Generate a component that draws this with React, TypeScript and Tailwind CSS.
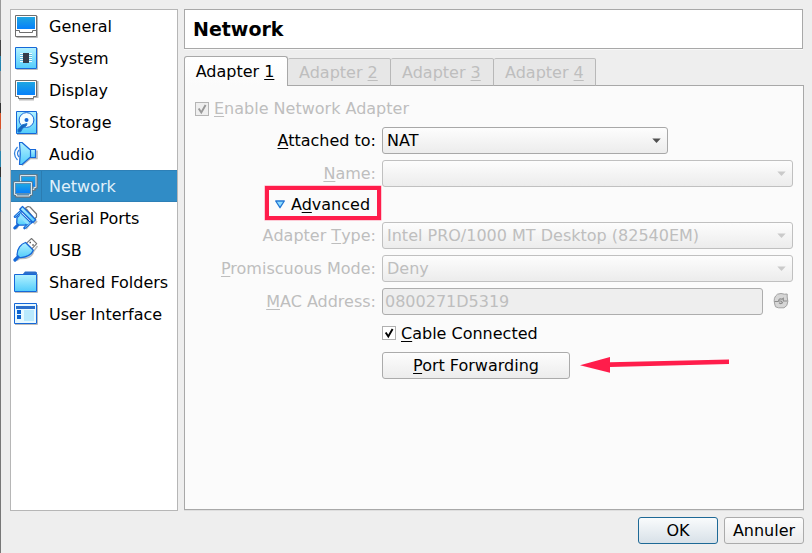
import React from 'react';

const BLUE = '#1668d8';

function Gradients() {
  return (
    <svg width="0" height="0" className="absolute">
      <defs>
        <linearGradient id="screen" x1="0" y1="0" x2="0" y2="1">
          <stop offset="0" stopColor="#1fa6e2" />
          <stop offset="1" stopColor="#0680fa" />
        </linearGradient>
        <linearGradient id="cyan" x1="0" y1="0" x2="0" y2="1">
          <stop offset="0" stopColor="#b4f2ff" />
          <stop offset="1" stopColor="#52ccfb" />
        </linearGradient>
      </defs>
    </svg>
  );
}

function Icon({ children }: { children: React.ReactNode }) {
  return (
    <svg width="26" height="26" viewBox="0 0 26 26" className="shrink-0" fill="none">
      {children}
    </svg>
  );
}

const icons: Record<string, React.ReactNode> = {
  General: (
    <Icon>
      <path d="M3.5 24.5H24.5V3" stroke="#bbb" />
      <path d="M2.5 2.5h21v21h-21z" fill="#fff" stroke="#6e6e6e" />
      <path d="M4 4h18v12H4z" fill="url(#screen)" />
      <path d="M2.5 17.5h4v2h13v-2h4" stroke="#6e6e6e" />
    </Icon>
  ),
  System: (
    <Icon>
      <path d="M3.5 24.5H24.5V3" stroke="#bbb" />
      <path d="M2.5 2.5h21v21h-21z" fill="url(#cyan)" stroke={BLUE} />
      <path d="M7 8.5h12M7 10.5h12M7 12.5h12M7 14.5h12M7 16.5h12" stroke="#f4fdff" />
      <path d="M7 9.5h12M7 11.5h12M7 13.5h12M7 15.5h12" stroke="#62bde0" />
      <path d="M10 8h6v10h-6z" fill="#353b48" />
    </Icon>
  ),
  Display: (
    <Icon>
      <path d="M6 22.5h15M24.5 4v16h-4" stroke="#bbb" strokeWidth="2" />
      <path d="M2.5 3.5h21v16h-3v2h-15v-2h-3z" fill="#fff" stroke="#6e6e6e" />
      <path d="M4 5h18v13H4z" fill="url(#screen)" />
    </Icon>
  ),
  Storage: (
    <Icon>
      <path d="M4 25.5h20.5V4" stroke="#bbb" />
      <path d="M3.5 2.5h20v22h-20z" fill="url(#cyan)" stroke={BLUE} />
      <circle cx="13.5" cy="11" r="7.4" fill="#f4fdff" stroke={BLUE} />
      <circle cx="13.5" cy="11" r="2" fill={BLUE} />
      <path d="M5 20.5l4-4.5 5-1.5-.5 2-4 3-2 3.5H5z" fill="#1565bc" stroke="#1a75cf" />
    </Icon>
  ),
  Audio: (
    <Icon>
      <path d="M4.500 6Q-1.500 12.500 4.500 19M6 9Q3 12.500 6 16" stroke="#3181dd" strokeWidth="1.200" />
      <path d="M9 24.500l8.500-7h6.500V9.500" stroke="#b5b5b5" strokeWidth="1.500" />
      <path d="M17 8.500h5.500v8H17z" fill="url(#cyan)" stroke={BLUE} strokeWidth="1.200" />
      <path d="M6.500 1.500H9L17.500 9v7L9 23.500H6.500Q8 12.500 6.500 1.500z" fill="url(#cyan)" stroke={BLUE} strokeWidth="1.200" strokeLinejoin="round" />
    </Icon>
  ),
  Network: (
    <Icon>
      <path d="M7.500 2.500h16v12h-2v2h-12v-2h-2z" fill="#5d8fb4" stroke="#66757f" strokeWidth="2.400" />
      <path d="M7.500 2.500h15.500v12h-2v2h-11v-2h-2.500z" fill="#5d8fb4" stroke="#d8e4eb" />
      <path d="M9 4h13v9.500H9z" fill="url(#screen)" />
      <path d="M1.500 9.500h17v12h-2v2h-13v-2h-2z" fill="#5d8fb4" stroke="#66757f" strokeWidth="2.400" />
      <path d="M1.500 9.500h17v12h-2v1.500h-13v-1.500h-2z" fill="#5d8fb4" stroke="#dce7ed" />
      <path d="M3 11h14v9H3z" fill="url(#screen)" />
    </Icon>
  ),
  'Serial Ports': (
    <Icon>
      <path d="M3 24l2-3M13 24l3-4M21 19l3-3" stroke="#bbb" strokeWidth="2" />
      <path d="M12.500 3l2.500-1.500 2 .5 6.500 7v3l-2 2z" fill="#fff" stroke="#777" strokeWidth="1.200" strokeLinejoin="round" />
      <path d="M1.800 23l3-3" stroke={BLUE} strokeWidth="3" strokeLinecap="round" />
      <path d="M7 7.500l-.5 3L4 12.500l-.3 5.700 2.300 2 6.500-.2 2.500-2.500 3 .5z" fill="url(#cyan)" stroke={BLUE} strokeWidth="1.300" strokeLinejoin="round" />
      <path d="M2 11.700l6.500-6M11.500 23l7.500-6.500" stroke={BLUE} strokeWidth="2.600" strokeLinecap="round" />
      <path d="M2.300 11.400l5.500-5M12 22.500l6-5" stroke="#8ce0ff" strokeWidth=".8" />
      <path d="M9.500 1.500l13.200 13.200-2.700 2.800L6.800 4.300z" fill="url(#cyan)" stroke={BLUE} strokeWidth="1.300" strokeLinejoin="round" />
      <path d="M7 8l10 10-3 1.500-7.500-7.500z" fill="#8fe2fe" />
    </Icon>
  ),
  USB: (
    <Icon>
      <path d="M4 23.500l3-2Q19 22 20.500 14.500L24.500 9" stroke="#bbb" strokeWidth="1.500" />
      <path d="M13.300 6.300L18.500 1.500l5.200 5.200-4.900 5.100z" fill="#fff" stroke="#777" strokeWidth="1.100" strokeLinejoin="round" />
      <path d="M16.500 5.500h1.500M19.300 8h1.500" stroke="#555" strokeWidth="1.500" />
      <path d="M2 23l3-3" stroke={BLUE} strokeWidth="3.200" strokeLinecap="round" />
      <path d="M12.500 5.500l7.800 7.800C19 17.500 13 21 6.500 20.500L4 18C4 11.500 8 7 12.500 5.500z" fill="url(#cyan)" stroke={BLUE} strokeWidth="1.300" strokeLinejoin="round" />
    </Icon>
  ),
  'Shared Folders': (
    <Icon>
      <path d="M2 23.500h22.500V5" stroke="#bbb" />
      <path d="M9.500 5.500l2.500-3h10.500l1.500 1v2z" fill="#2b6fcb" />
      <path d="M1.500 5.500h22v17h-22z" fill="url(#cyan)" stroke={BLUE} />
    </Icon>
  ),
  'User Interface': (
    <Icon>
      <path d="M2 23.500h22.500V4" stroke="#bbb" />
      <path d="M1.500 2.500h22v20h-22z" fill="#e8f9ff" stroke={BLUE} />
      <path d="M3 5h19v3H3z" fill="#2b6fcb" />
      <path d="M4 9h4v4H4zM4 14h4v4H4z" fill="#0c63d0" />
      <path d="M11 9h10v11H11z" fill="#b9e9fd" />
    </Icon>
  ),
};

const sections = Object.keys(icons);

function Key({ children }: { children: React.ReactNode }) {
  return (
    <span className="underline decoration-1 underline-offset-2 [text-decoration-skip-ink:none]">{children}</span>
  );
}

function Sidebar() {
  return (
    <nav className="h-[502px] w-[168px] shrink-0 border border-[#b6b6b6] bg-white">
      {sections.map((name) => {
        const active = name === 'Network';
        return (
          <div
            key={name}
            className={`flex h-8 items-center pl-[2px] ${
              active
                ? 'border-y border-[#2d80b7] bg-[#308cc6] text-[#e0f0fa]'
                : ''
            }`}
          >
            {icons[name]}
            <div
              className={`ml-[2px] flex flex-1 items-center self-stretch ${
                active ? 'border-l border-[#2b7cb1] pl-[7px]' : 'pl-2'
              }`}
            >
              {name}
            </div>
          </div>
        );
      })}
    </nav>
  );
}

function Tabs() {
  return (
    <div className="-mb-px flex h-[30px] items-end">
      <div className="z-10 flex h-[30px] w-[104px] items-center justify-center rounded-t-[3px] border border-b-0 border-[#a8a8a8] bg-gradient-to-b from-white to-[#fbfbfb] pr-[2px]">
        <span>Adapter <Key>1</Key></span>
      </div>
      {[2, 3, 4].map((n) => (
        <div
          key={n}
          className={`flex h-7 items-center rounded-t-[2px] border border-l-0 border-t-[#bfbfbf] border-r-[#b8b8b8] border-b-[#a8a8a8] bg-[#e7e7e7] pl-[11px] text-[#bebebe] ${
            n === 4 ? 'w-[102px]' : 'w-[103px]'
          }`}
        >
          <span>Adapter <Key>{n}</Key></span>
        </div>
      ))}
    </div>
  );
}

function Check({ disabled = false }: { disabled?: boolean }) {
  return (
    <span
      className={`flex h-[14px] w-[14px] shrink-0 items-center justify-center border ${
        disabled ? 'border-[#b5b5b5] bg-[#efefef]' : 'border-[#b0b0b0] bg-white'
      }`}
    >
      <svg width="12" height="12" viewBox="0 0 12 12" fill="none">
        <path d="M2.700 5.500l2.600 4L9.600 2" stroke={disabled ? '#999' : '#000'} strokeWidth="1.900" />
      </svg>
    </span>
  );
}

function Row({ label, className, children }: { label: React.ReactNode; className?: string; children: React.ReactNode }) {
  return (
    <div className={`flex h-[27px] items-center ${className ?? ''}`}>
      <div className="mr-[6px] w-[191px] shrink-0 text-right">{label}</div>
      {children}
    </div>
  );
}

function Combo({ value, disabled = false }: { value: string; disabled?: boolean }) {
  return (
    <div
      className={`flex h-[27px] items-center justify-between rounded-[3px] border bg-gradient-to-b from-[#fdfdfd] to-[#ececec] pl-1 pr-[6px] ${
        disabled ? 'w-[411px] border-[#c0c0c0]' : 'w-[286px] border-[#a8a8a8]'
      }`}
    >
      <span>{value}</span>
      <svg width="9" height="5" viewBox="0 0 9 5">
        <path d="M.3 .5h8.400L4.500 4.900z" fill={disabled ? '#cacaca' : '#505050'} />
      </svg>
    </div>
  );
}

function RefreshIcon() {
  return (
    <svg width="16" height="16" viewBox="0 0 16 16" className="-mt-px ml-[10px]" fill="none">
      <path d="M4.500 1.200Q8 -.2 11.500 1.200l2.700-.2V4q1.500 4.500-.4 8.500l-2.800 2.300H5.500L2.500 13.800 1.700 11Q-.2 4.500 4.500 1.200z" fill="#d6d6d6" stroke="#a2a2a2" />
      <path d="M1.500 8.500h4M10 8h4.500" stroke="#8c8c8c" strokeWidth="1.200" />
      <path d="M10.300 8V5.300L9 6.200Q6 5 5.500 8H8l1.500 1.500Q8.500 11.500 6 9.800" stroke="#8c8c8c" strokeWidth="1.100" />
    </svg>
  );
}

function AdapterPage() {
  return (
    <section className="h-[425px] border border-[#a8a8a8] bg-[#fbfbfb] pt-[15px] text-[#bebebe] shadow-[0_1px_0_#dedede]">
      <div className="flex h-[15px] items-center pl-[10px]">
        <Check disabled />
        <span className="ml-[5px]"><Key>E</Key>nable Network Adapter</span>
      </div>
      <Row className="mt-[11px] text-black" label={<><Key>A</Key>ttached to:</>}>
        <Combo value="NAT" />
      </Row>
      <Row className="mt-[6px]" label={<><Key>N</Key>ame:</>}>
        <Combo value="" disabled />
      </Row>
      <div className="ml-[80px] mt-[-1px] flex h-[34px] w-[116px] items-center border-[4px] border-[#ff1d4b] pl-[6px] pt-[2px] text-black shadow-[0_0_0_0.5px_#ff9bb0]">
        <svg width="10" height="9" viewBox="0 0 10 9" className="shrink-0">
          <path d="M.7 1h8.600L5 7.700z" fill="#8fdcff" stroke="#2377d4" strokeWidth="1.300" strokeLinejoin="round" />
        </svg>
        <span className="ml-[6px]">A<Key>d</Key>vanced</span>
      </div>
      <Row className="mt-[2px]" label={<span className="[font-kerning:none]">Adapter <Key>T</Key>ype:</span>}>
        <Combo value="Intel PRO/1000 MT Desktop (82540EM)" disabled />
      </Row>
      <Row className="mt-[6px]" label={<><Key>P</Key>romiscuous Mode:</>}>
        <Combo value="Deny" disabled />
      </Row>
      <Row className="mt-[6px]" label={<><Key>M</Key>AC Address:</>}>
        <div className="flex h-[27px] w-[381px] items-center rounded-[3px] border border-[#adadad] bg-[#eee] pl-[2px]">0800271D5319</div>
        <RefreshIcon />
      </Row>
      <div className="ml-[197px] mt-[10px] flex h-4 items-center text-black">
        <Check />
        <span className="ml-[5px]"><Key>C</Key>able Connected</span>
      </div>
      <div className="ml-[197px] mt-[11px] flex h-[27px] items-center text-black">
        <button className="h-[27px] w-[188px] rounded-[3px] border border-[#ababab] bg-gradient-to-b from-[#fdfdfd] to-[#ececec]">
          <Key>P</Key>ort Forwarding
        </button>
        <svg width="150" height="27" viewBox="0 0 150 27" className="ml-[10px]">
          <path d="M0 13.300L30 5v5.300L149 7.500v4.500L30 15v5.700z" fill="#ff1d4b" />
        </svg>
      </div>
    </section>
  );
}

export default function App() {
  return (
    <div className="flex h-[553px] w-[812px] overflow-hidden bg-[#eee] font-['DejaVu_Sans',sans-serif] text-[16px] leading-[19px] text-black">
      <Gradients />
      <div className="flex w-px shrink-0 flex-col bg-[#777]">
        <div className="h-10 bg-[#999]" />
        <div className="h-4 bg-[#444]" />
        <div className="h-[15px] bg-[#2480aa]" />
        <div className="h-[32px] bg-[#999]" />
        <div className="h-[10px] bg-[#333]" />
        <div className="h-4 bg-[#d65329]" />
        <div className="h-[22px] bg-[#888]" />
        <div className="h-4 bg-[#2c84aa]" />
        <div className="h-[10px] bg-[#333]" />
        <div className="h-[35px] bg-[#2c78a0]" />
      </div>
      <div className="flex flex-1 pl-[9px] pt-[9px]">
        <Sidebar />
        <main className="ml-[6px] w-[620px] shrink-0">
          <h1 className="flex h-10 w-[619px] items-center border border-[#a8a8a8] bg-white pl-2 text-[19px] font-bold shadow-[0_1px_0_#f8f8f8]">
            Network
          </h1>
          <div className="mt-[7px]">
            <Tabs />
            <AdapterPage />
          </div>
          <div className="mt-[7px] flex justify-end gap-[6px]">
            <button className="h-[27px] w-[80px] rounded-[3px] border border-[#1e6996] bg-gradient-to-b from-[#f9fbfc] to-[#d8e1e8]">OK</button>
            <button className="h-[27px] w-[80px] rounded-[3px] border border-[#ababab] bg-gradient-to-b from-[#fdfdfd] to-[#ececec]">Annuler</button>
          </div>
        </main>
      </div>
    </div>
  );
}
